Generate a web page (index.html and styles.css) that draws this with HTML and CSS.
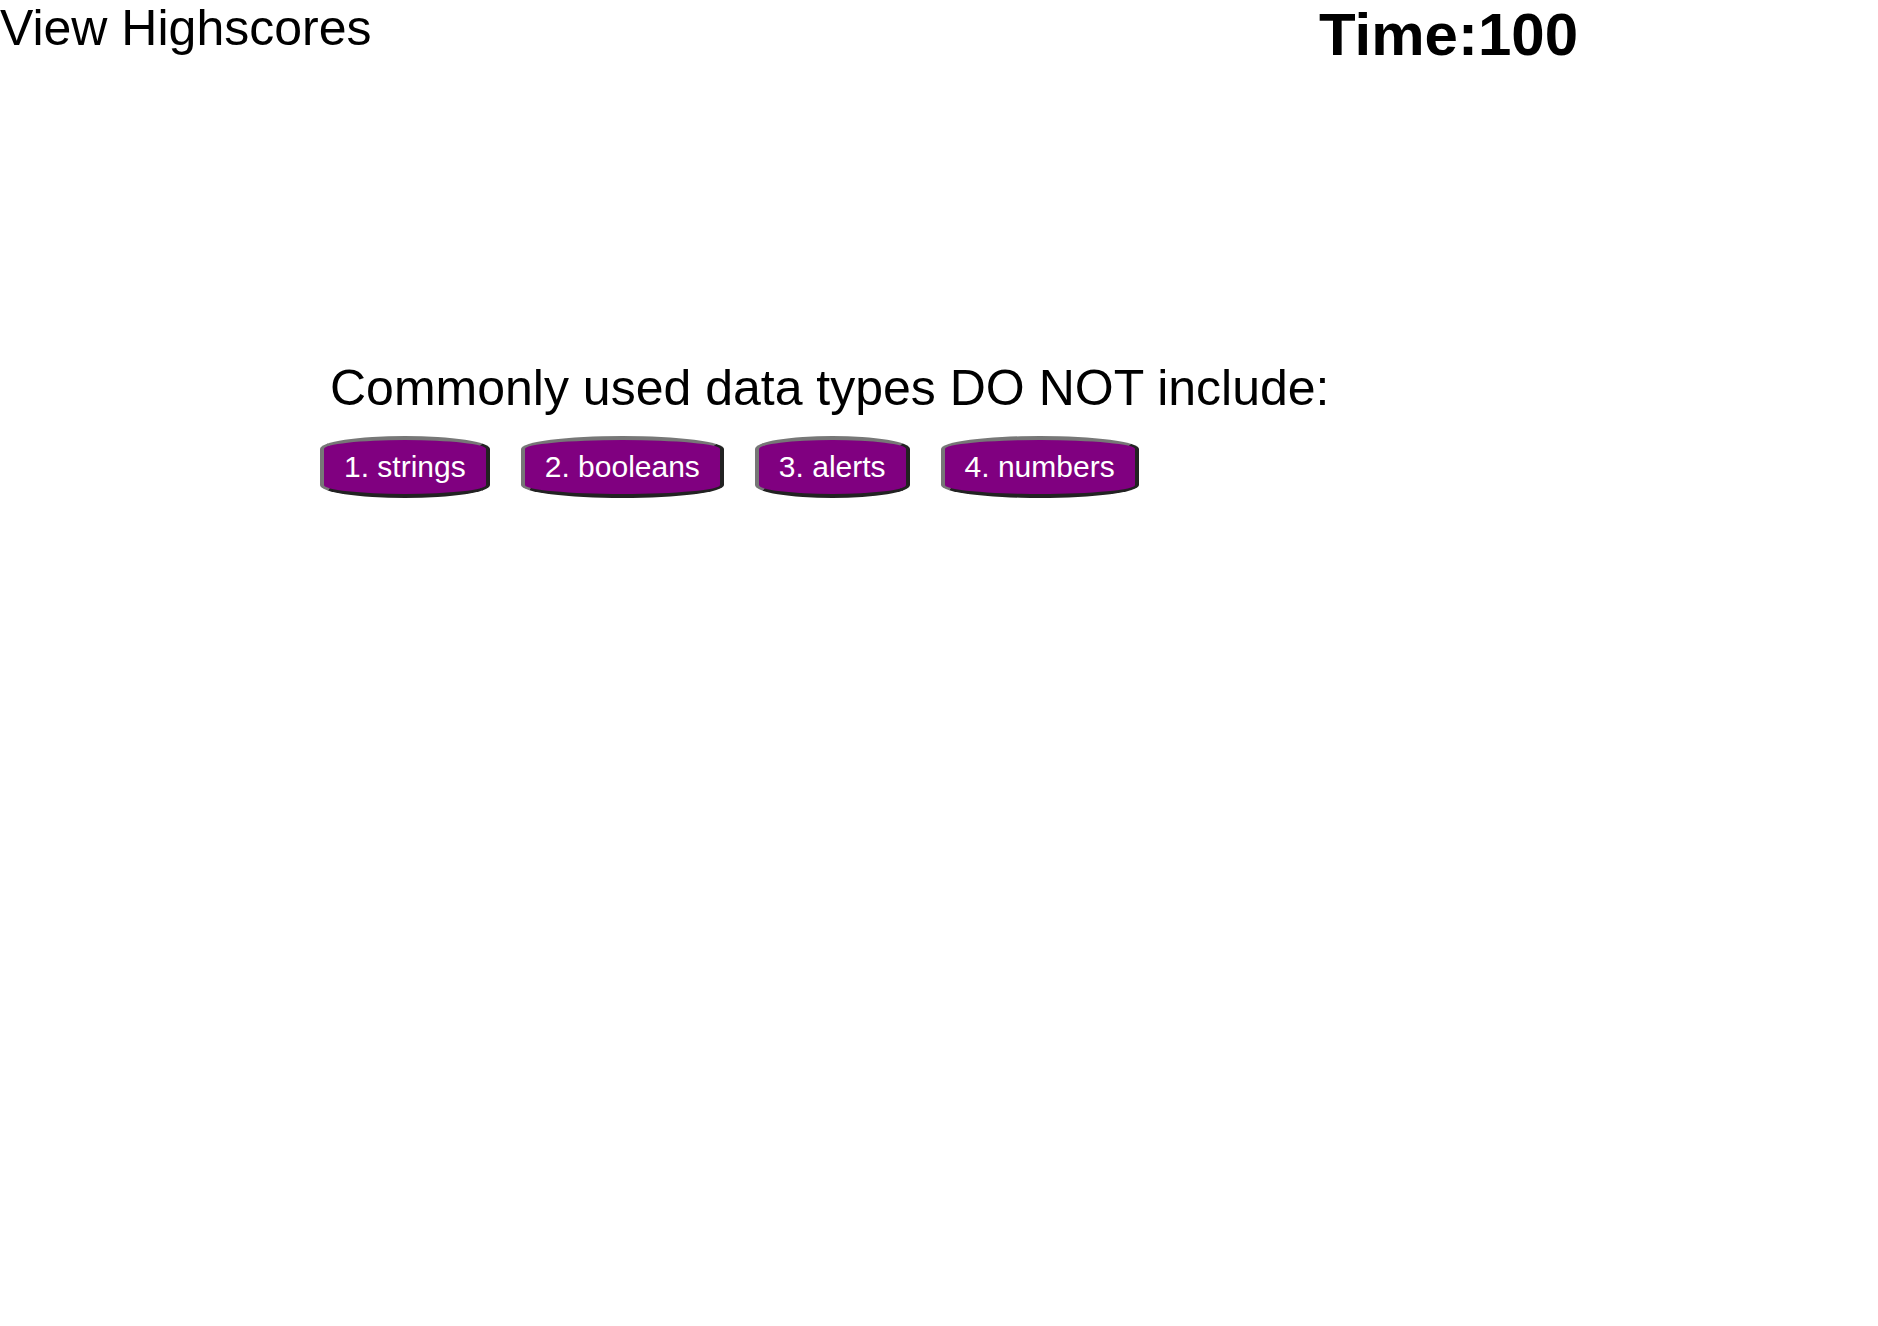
FILE: index.html
```html
<!DOCTYPE html>
<html lang="en">
<head>
<meta charset="utf-8">
<title>Code Quiz</title>
<link rel="stylesheet" href="styles.css">
</head>
<body>
<header class="top-bar">
  <a class="highscores-link" href="#">View Highscores</a>
  <div class="timer">Time:<span class="timer-value">100</span></div>
</header>
<main class="quiz">
  <h2 class="question">Commonly used data types DO NOT include:</h2>
  <div class="choices">
    <button class="choice">1. strings</button>
    <button class="choice">2. booleans</button>
    <button class="choice">3. alerts</button>
    <button class="choice">4. numbers</button>
  </div>
</main>
</body>
</html>
```
FILE: styles.css
```css
html, body {
  margin: 0;
  padding: 0;
  background: #ffffff;
}

body {
  font-family: "Liberation Sans", Arial, Helvetica, sans-serif;
  color: #000000;
}

.top-bar {
  display: flex;
  justify-content: space-between;
  align-items: flex-start;
  padding-right: 300px;
}

.highscores-link {
  font-size: 50px;
  line-height: 57px;
  color: #000000;
  text-decoration: none;
}

.timer {
  font-size: 60px;
  font-weight: bold;
  line-height: 69px;
}

.quiz {
  padding-top: 291px;
  padding-left: 320px;
}

.question {
  margin: 0 0 19px 10px;
  font-size: 50px;
  font-weight: normal;
  line-height: 57px;
}

.choices {
  display: flex;
  gap: 31px;
}

.choice {
  font-family: "Liberation Sans", Arial, Helvetica, sans-serif;
  font-size: 30px;
  line-height: 34px;
  padding: 10px 20px;
  color: #ffffff;
  background: #800080;
  border-width: 4px;
  border-style: solid;
  border-color: #777777 #222222 #222222 #777777;
  border-radius: 50% / 13px;
  cursor: pointer;
}
```
